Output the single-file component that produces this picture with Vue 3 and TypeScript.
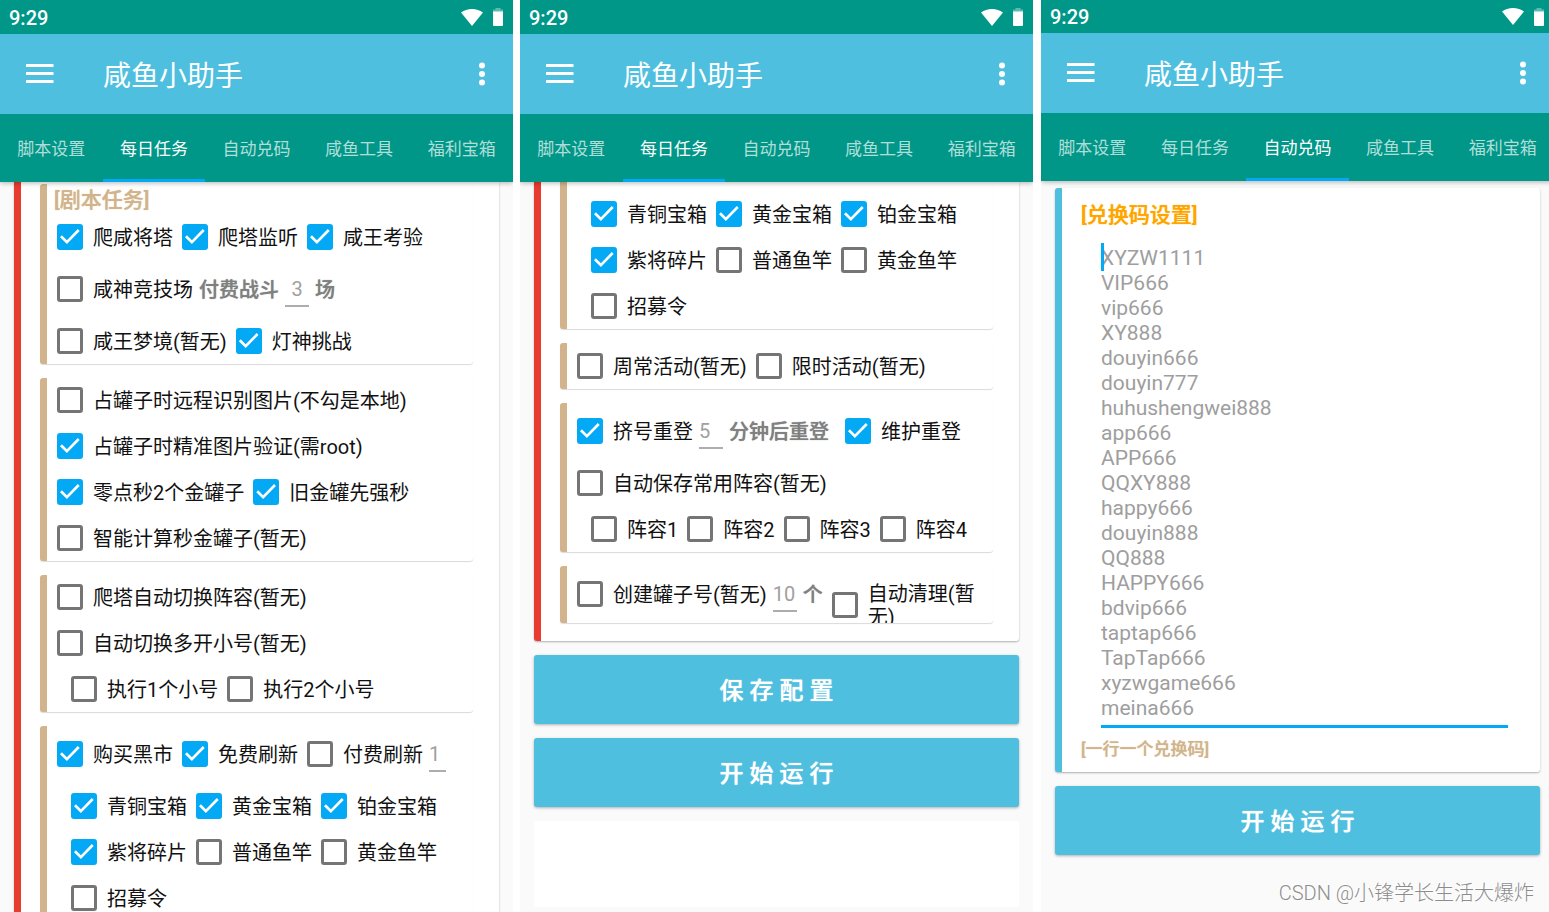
<script setup lang="ts">
import { ref } from 'vue'

interface Item {
  kind: 'check' | 'word' | 'field'
  text: string
  on?: boolean
  wide?: boolean
  wrap?: boolean
  narrow?: boolean
  centered?: boolean
  name?: string
}
interface Row {
  items: Item[]
  indent?: boolean
}
interface Section {
  title?: string
  rows: Row[]
}
interface Screen {
  activeTab: number
  kind: 'tasksTop' | 'tasksEnd' | 'codes'
  sections: Section[]
  buttons: string[]
}

const tabs = ['脚本设置', '每日任务', '自动兑码', '咸鱼工具', '福利宝箱']

const check = (text: string, on = false): Item => ({ kind: 'check', text, on })
const row = (...items: Item[]): Row => ({ items })
const indented = (...items: Item[]): Row => ({ items, indent: true })

const marketRows = (): Row[] => [
  indented(check('青铜宝箱', true), check('黄金宝箱', true), check('铂金宝箱', true)),
  indented(check('紫将碎片', true), check('普通鱼竿'), check('黄金鱼竿')),
  indented(check('招募令')),
]

const screens = ref<Screen[]>([
  {
    activeTab: 1,
    kind: 'tasksTop',
    buttons: [],
    sections: [
      {
        title: '[剧本任务]',
        rows: [
          row(check('爬咸将塔', true), check('爬塔监听', true), check('咸王考验', true)),
          row(
            check('咸神竞技场'),
            { kind: 'word', text: '付费战斗' },
            { kind: 'field', text: '3', centered: true, name: '付费战斗场数' },
            { kind: 'word', text: '场' },
          ),
          row(check('咸王梦境(暂无)'), check('灯神挑战', true)),
        ],
      },
      {
        rows: [
          row(check('占罐子时远程识别图片(不勾是本地)')),
          row(check('占罐子时精准图片验证(需root)', true)),
          row(check('零点秒2个金罐子', true), check('旧金罐先强秒', true)),
          row(check('智能计算秒金罐子(暂无)')),
        ],
      },
      {
        rows: [
          row(check('爬塔自动切换阵容(暂无)')),
          row(check('自动切换多开小号(暂无)')),
          indented(check('执行1个小号'), check('执行2个小号')),
        ],
      },
      {
        rows: [
          row(check('购买黑市', true), check('免费刷新', true), check('付费刷新'), {
            kind: 'field',
            text: '1',
            narrow: true,
            name: '付费刷新次数',
          }),
          ...marketRows(),
        ],
      },
    ],
  },
  {
    activeTab: 1,
    kind: 'tasksEnd',
    buttons: ['保 存 配 置', '开 始 运 行'],
    sections: [
      { rows: marketRows() },
      { rows: [row(check('周常活动(暂无)'), check('限时活动(暂无)'))] },
      {
        rows: [
          row(
            check('挤号重登', true),
            { kind: 'field', text: '5', name: '重登等待分钟' },
            { kind: 'word', text: '分钟后重登', wide: true },
            check('维护重登', true),
          ),
          row(check('自动保存常用阵容(暂无)')),
          indented(check('阵容1'), check('阵容2'), check('阵容3'), check('阵容4')),
        ],
      },
      {
        rows: [
          row(
            check('创建罐子号(暂无)'),
            { kind: 'field', text: '10', name: '创建罐子号个数' },
            { kind: 'word', text: '个' },
            { kind: 'check', text: '自动清理(暂无)', on: false, wrap: true },
          ),
        ],
      },
    ],
  },
  { activeTab: 2, kind: 'codes', buttons: ['开 始 运 行'], sections: [] },
])

const codes = ref(
  [
    'XYZW1111', 'VIP666', 'vip666', 'XY888', 'douyin666', 'douyin777', 'huhushengwei888',
    'app666', 'APP666', 'QQXY888', 'happy666', 'douyin888', 'QQ888', 'HAPPY666', 'bdvip666',
    'taptap666', 'TapTap666', 'xyzwgame666', 'meina666',
  ].join('\n'),
)

const hasField = (r: Row) => r.items.some((i) => i.kind === 'field')
</script>

<template>
  <main class="board">
    <div v-for="(screen, s) in screens" :key="s" class="slot" :class="screen.kind">
      <div class="phone">
        <header class="top">
          <div class="status">
            <span class="clock">9:29</span>
            <span class="status-icons">
              <svg width="22" height="17" viewBox="0 0 22 17" aria-hidden="true">
                <path d="M11 17 L0 3.6 Q4.6 0 11 0 Q17.400 0 22 3.600 Z" fill="#fff" />
              </svg>
              <svg width="10" height="18" viewBox="0 0 10 18" aria-hidden="true">
                <path d="M2.500 0h5v1.500H10V4H0V1.500h2.500z" fill="#fff" fill-opacity="0.350" />
                <path d="M0 3.500h10V17a1 1 0 0 1-1 1H1a1 1 0 0 1-1-1z" fill="#fff" />
              </svg>
            </span>
          </div>
          <div class="appbar">
            <button class="icon-button" aria-label="菜单">
              <svg width="28" height="20" viewBox="0 0 28 20">
                <path d="M0 0h27.500v3H0zM0 8h27.500v3H0zM0 16h27.500v3H0z" fill="#fff" />
              </svg>
            </button>
            <h1>咸鱼小助手</h1>
            <button class="icon-button more" aria-label="更多">
              <svg width="6" height="24" viewBox="0 0 6 24">
                <circle cx="3" cy="3.500" r="3" fill="#fff" />
                <circle cx="3" cy="12" r="3" fill="#fff" />
                <circle cx="3" cy="20.500" r="3" fill="#fff" />
              </svg>
            </button>
          </div>
          <nav class="tabs" role="tablist">
            <button
              v-for="(tab, t) in tabs"
              :key="tab"
              role="tab"
              class="tab"
              :class="{ active: t === screen.activeTab }"
              :aria-selected="t === screen.activeTab"
              @click="screen.activeTab = t"
            >
              {{ tab }}
            </button>
          </nav>
        </header>

        <div class="content">
          <section v-if="screen.kind === 'codes'" class="card code-card">
            <h2 class="code-title strong" id="code-title">[兑换码设置]</h2>
            <div class="code-box">
              <i class="caret"></i>
              <textarea v-model="codes" rows="19" aria-labelledby="code-title" spellcheck="false"></textarea>
            </div>
            <p class="note strong">[一行一个兑换码]</p>
          </section>

          <section v-else class="card task-card">
            <div v-for="(section, n) in screen.sections" :key="n" class="group">
              <h2 v-if="section.title" class="group-title strong">{{ section.title }}</h2>
              <div
                v-for="(r, k) in section.rows"
                :key="k"
                class="row"
                :class="{ indent: r.indent, tall: hasField(r) }"
              >
                <template v-for="(item, i) in r.items" :key="i">
                  <label
                    v-if="item.kind === 'check'"
                    class="check"
                    :class="{ wrap: item.wrap, next: i > 0 }"
                  >
                    <input v-model="item.on" type="checkbox" />
                    <span>{{ item.text }}</span>
                  </label>
                  <input
                    v-else-if="item.kind === 'field'"
                    v-model="item.text"
                    type="text"
                    class="field"
                    :class="{ narrow: item.narrow, centered: item.centered }"
                    :aria-label="item.name"
                  />
                  <span v-else class="word strong" :class="{ wide: item.wide }">{{ item.text }}</span>
                </template>
              </div>
            </div>
          </section>

          <button v-for="label in screen.buttons" :key="label" class="action strong">
            {{ label }}
          </button>
          <div v-if="screen.kind === 'tasksEnd'" class="log"></div>
        </div>
      </div>
    </div>
    <p class="watermark">CSDN @小锋学长生活大爆炸</p>
  </main>
</template>

<style>
body {
  margin: 0;
  background: #fff;
}
</style>

<style scoped>
.board {
  position: relative;
  display: flex;
  height: 100vh;
  overflow: hidden;
  font-family: Roboto, 'Noto Sans CJK SC', sans-serif;
  font-size: 20px;
  color: #111;
}
button,
input,
textarea {
  font-family: inherit;
  margin: 0;
}
h1,
h2,
p {
  margin: 0;
}
.strong {
  font-weight: 500;
  text-shadow: 0 0 1px currentColor;
}
.slot {
  flex: 513 1 0;
  min-width: 0;
  overflow: hidden;
}
.tasksEnd {
  margin-left: 7px;
}
.codes {
  flex-grow: 508;
  margin-left: 8px;
}
.phone {
  display: flex;
  flex-direction: column;
  height: 100%;
  background: #fafafa;
}
.codes .phone {
  width: calc(100% + 5px);
}
.top {
  position: relative;
  z-index: 1;
  flex: none;
  background: #009788;
  box-shadow: 0 1px 5px rgba(0, 0, 0, 0.3);
}
.status {
  display: flex;
  align-items: center;
  justify-content: space-between;
  box-sizing: border-box;
  height: 34px;
  padding: 0 10px 0 9px;
  color: #fff;
  font-weight: 500;
}
.codes .status {
  height: 33px;
}
.clock {
  padding-top: 1px;
}
.status-icons {
  display: flex;
  align-items: center;
  gap: 10px;
}
.appbar {
  display: flex;
  align-items: center;
  height: 80px;
  padding: 0 28px 0 26px;
  background: #4fbfdf;
}
.icon-button {
  display: flex;
  padding: 0;
  border: 0;
  background: none;
}
.more {
  margin-left: auto;
}
h1 {
  margin-left: 49px;
  color: #fff;
  font-size: 28px;
  font-weight: 400;
}
.tabs {
  display: flex;
  height: 68px;
}
.tab {
  flex: 1;
  padding: 1px 0 0;
  border: 0;
  border-bottom: 3px solid transparent;
  background: none;
  color: rgba(255, 255, 255, 0.7);
  font-size: 17px;
}
.tab.active {
  border-bottom-color: #03a9f4;
  color: #fff;
}
.content {
  display: flex;
  flex: 1;
  flex-direction: column;
  gap: 14px;
  min-height: 0;
  padding: 0 14px;
  overflow: hidden;
}
.card {
  border-left: 7px solid #e93c30;
  border-radius: 3px;
  background: #fff;
  box-shadow: 0 1px 2px rgba(0, 0, 0, 0.3);
}
.task-card {
  display: flex;
  flex-direction: column;
  gap: 14px;
  flex: none;
  padding: 0 26px 18px 19px;
  border-top-left-radius: 0;
  border-top-right-radius: 0;
}
.tasksTop .task-card {
  padding-top: 2px;
}
.group {
  display: flex;
  flex-direction: column;
  gap: 1px;
  border-left: 7px solid #d2b48c;
  border-radius: 3px;
  background: #fff;
  box-shadow: 0 1px 1px rgba(0, 0, 0, 0.15);
}
.tasksEnd .group:first-child {
  padding-top: 10px;
  border-top-left-radius: 0;
}
.group-title {
  height: 30px;
  padding-left: 7px;
  color: #d2b48c;
  font-size: 21px;
  line-height: 32px;
}
.row {
  display: flex;
  align-items: center;
  gap: 6px;
  height: 45px;
  padding-left: 10px;
  overflow: hidden;
}
.row:only-child {
  height: 46px;
}
.row.tall {
  height: 57px;
}
.indent {
  padding-left: 24px;
}
.check {
  display: flex;
  flex: none;
  align-items: center;
  gap: 10px;
  line-height: 23px;
}
.check.next {
  margin-left: 3px;
}
.check.wrap {
  flex: 1 1 0;
  align-self: flex-start;
  min-width: 0;
  margin-top: 15px;
}
.check span {
  padding-top: 2px;
}
.check input {
  flex: none;
  box-sizing: border-box;
  width: 26px;
  height: 26px;
  margin-bottom: 1px;
  border: 3px solid #757575;
  border-radius: 3px;
  background: #fff;
  appearance: none;
}
.check input:checked {
  border: 0;
  background: #03a9f4;
}
.check input:checked::before {
  content: '';
  display: block;
  width: 26px;
  height: 26px;
  background: #fff;
  clip-path: path('M3 13.200 L4.900 11.300 L9.900 16.200 L20.800 5 L22.700 6.900 L9.900 20 Z');
}
.word {
  flex: none;
  padding-bottom: 2px;
  color: #808080;
}
.wide {
  margin-right: 7px;
}
.field {
  flex: none;
  box-sizing: border-box;
  width: 24px;
  height: 36px;
  margin-bottom: 1px;
  padding: 1px 0 0;
  border: 0;
  border-bottom: 2px solid #adadad;
  border-radius: 0;
  background: none;
  color: #a0a0a0;
  font-size: 20px;
  outline: none;
}
.field.narrow {
  width: 17px;
}
.field.centered {
  text-align: center;
}
.action {
  flex: none;
  height: 69px;
  padding: 0 0 3px;
  border: 0;
  border-radius: 3px;
  background: #4fbfdf;
  box-shadow: 0 1px 3px rgba(0, 0, 0, 0.3);
  color: #fff;
  font-size: 24px;
}
.log {
  height: 86px;
  flex: none;
  background: #fff;
}
.code-card {
  flex: none;
  box-sizing: border-box;
  margin-top: 7px;
  padding: 12px 32px 10px 19px;
  border-left-color: #4fbfdf;
}
.code-title {
  color: #ffa500;
  font-size: 21px;
  line-height: 30px;
}
.code-box {
  position: relative;
  margin: 16px 0 0 20px;
}
.caret {
  position: absolute;
  top: -3px;
  left: 0;
  width: 3px;
  height: 28px;
  background: #03a9f4;
}
textarea {
  display: block;
  box-sizing: border-box;
  width: 100%;
  height: 482px;
  padding: 0;
  border: 0;
  border-bottom: 3px solid #03a9f4;
  border-radius: 0;
  background: none;
  color: #9e9e9e;
  font-size: 21px;
  line-height: 25px;
  outline: none;
  overflow: hidden;
  resize: none;
}
.note {
  padding-top: 9px;
  color: #d2b48c;
  font-size: 17px;
  line-height: 25px;
}
.watermark {
  position: absolute;
  right: 15px;
  bottom: 4px;
  color: #8c8c8c;
  font-size: 20px;
  font-weight: 300;
  line-height: 30px;
  text-shadow: -1px -1px 0 #fff;
}
</style>
